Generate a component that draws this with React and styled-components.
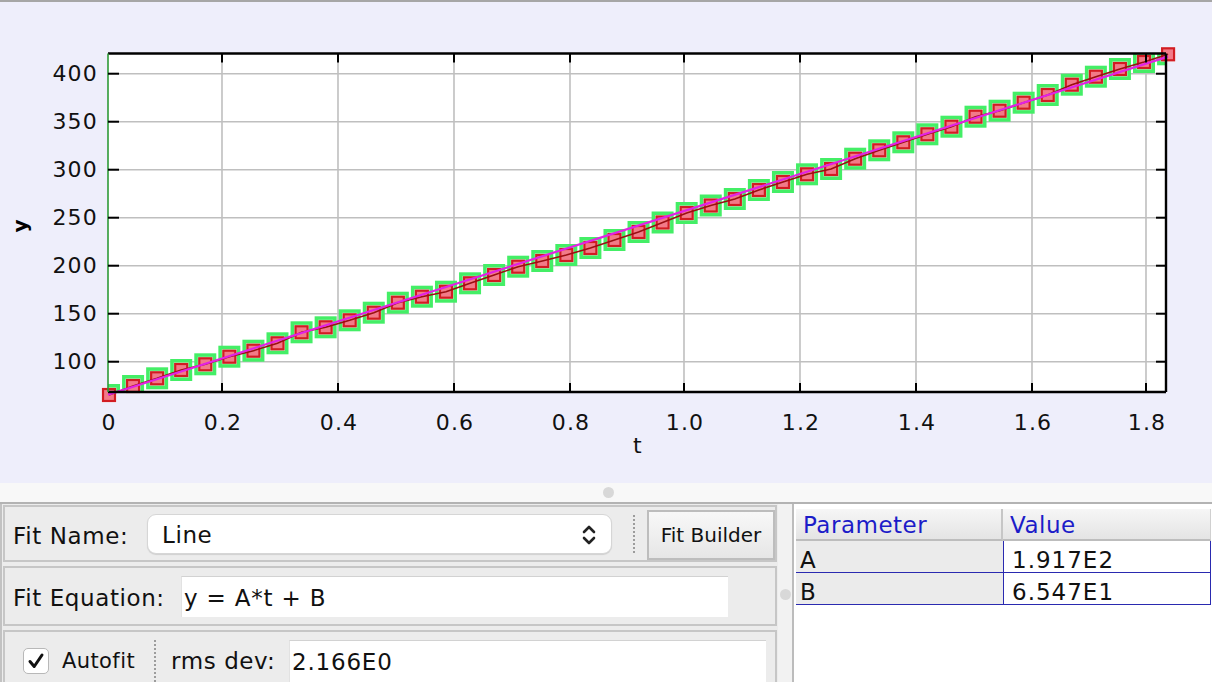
import React from 'react';
import styled, { createGlobalStyle } from 'styled-components';

const GlobalStyle = createGlobalStyle`
  html, body { margin: 0; padding: 0; background: #fff; }
  body { font-family: "DejaVu Sans", Verdana, sans-serif; color: #111; }
`;

const Window = styled.div`
  width: 1212px;
  height: 682px;
  overflow: hidden;
  display: flex;
  flex-direction: column;
  box-sizing: border-box;
  border-top: 2px solid #a6a6a6;
`;

const PlotPanel = styled.div`
  height: 481px;
  flex: none;
  background: #eeeefb;
  svg { display: block; }
`;

const HSplit = styled.div`
  height: 19px;
  flex: none;
  background: #f8f8f8;
  display: flex;
  justify-content: center;
  align-items: center;
`;

const Grip = styled.span`
  width: 11px;
  height: 11px;
  border-radius: 50%;
  background: #d8d8d8;
  margin-left: ${p => p.$shift ?? 0}px;
`;

const Bottom = styled.div`
  flex: 1;
  min-height: 0;
  display: flex;
  background: #ececec;
  border-top: 2px solid #b3b3b3;
`;

const FitPanel = styled.div`
  width: 778px;
  flex: none;
  box-sizing: border-box;
  padding: 1px 1px 0 1px;
  border-left: 2px solid #c2c2c2;
  display: flex;
  flex-direction: column;
  gap: 4px;
`;

const Row = styled.div`
  height: ${p => p.$h}px;
  flex: none;
  box-sizing: border-box;
  border: 2px solid #c6c6c6;
  background: #ececec;
  display: flex;
  align-items: center;
  padding-left: ${p => p.$pl ?? 8}px;
`;

const FieldLabel = styled.span`
  width: ${p => p.$w}px;
  flex: none;
  font-size: 23px;
  letter-spacing: 0.6px;
  white-space: nowrap;
  padding-top: ${p => p.$pt ?? 0}px;
`;

const Select = styled.div`
  width: 465px;
  height: 40px;
  box-sizing: border-box;
  background: #fff;
  border: 1px solid #d6d6d6;
  border-radius: 9px;
  box-shadow: 0 1px 1px rgba(0, 0, 0, 0.12);
  padding: 2px 14px 0 14px;
  display: flex;
  align-items: center;
  justify-content: space-between;
  font-size: 23px;
  letter-spacing: 0.6px;
`;

const DotSep = styled.span`
  width: 0;
  height: ${p => p.$h ?? 38}px;
  flex: none;
  border-left: 2px dotted #9c9c9c;
  margin-left: ${p => p.$ml}px;
  margin-right: ${p => p.$mr}px;
`;

const Button = styled.div`
  width: 128px;
  height: 50px;
  margin-top: 3px;
  box-sizing: border-box;
  border: 2px solid #bdbdbd;
  background: linear-gradient(#f8f8f8, #e6e6e6);
  display: flex;
  align-items: center;
  justify-content: center;
  font-size: 20px;
`;

const TextField = styled.div`
  width: ${p => p.$w}px;
  height: ${p => p.$h}px;
  flex: none;
  box-sizing: border-box;
  background: #fff;
  border-top: 1px solid #d2d2d2;
  border-left: 1px solid #e2e2e2;
  padding: ${p => p.$pt ?? 0}px 0 0 2px;
  display: flex;
  align-items: center;
  font-size: 23px;
  letter-spacing: 0.8px;
  white-space: nowrap;
`;

const CheckBox = styled.span`
  width: 26px;
  height: 26px;
  flex: none;
  box-sizing: border-box;
  margin-left: 18px;
  border: 1px solid #b8b8b8;
  border-radius: 5px;
  background: #fff;
  display: flex;
  align-items: center;
  justify-content: center;
`;

const CheckLabel = styled.span`
  width: 80px;
  margin-left: 13px;
  font-size: 21px;
  letter-spacing: 0.4px;
`;

const VSplit = styled.div`
  width: 14px;
  flex: none;
  display: flex;
  justify-content: center;
  align-items: center;
  padding-top: 2px;
  background: #f2f2f2;
`;

const TablePanel = styled.div`
  flex: 1;
  box-sizing: border-box;
  background: #fff;
  border-left: 2px solid #bcbcbc;
  padding: 5px 2px 0 2px;
`;

const Table = styled.div`
  display: grid;
  grid-template-columns: 207px 208px;
`;

const HeadCell = styled.div`
  height: 32px;
  box-sizing: border-box;
  background: linear-gradient(#f6f6f6, #e4e4e4);
  border-bottom: 2px solid #bdbdbd;
  border-right: ${p => (p.$first ? '2px solid #c6c6c6' : '1px solid #d0d0d0')};
  color: #1c1cc8;
  font-size: 23px;
  letter-spacing: 0.5px;
  padding: 1px 0 0 7px;
  display: flex;
  align-items: center;
`;

const NameCell = styled.div`
  height: 32px;
  box-sizing: border-box;
  background: #ebebeb;
  border-bottom: 1.5px solid #2a2ab0;
  font-size: 23px;
  padding: 6px 0 0 4px;
  display: flex;
  align-items: center;
`;

const ValueCell = styled(NameCell)`
  background: #fff;
  border-left: 1px solid #2a2ab0;
  border-right: 1px solid #2a2ab0;
  padding-left: 8px;
  letter-spacing: 1px;
`;

// chart geometry (pixel coords of the page)
const PL = 108, PT = 53.5, PR = 1166, PB = 392;
const XT = [108, 222, 338, 454, 570, 684, 800, 916, 1032, 1146];
const XL = ['0', '0.2', '0.4', '0.6', '0.8', '1.0', '1.2', '1.4', '1.6', '1.8'];
const YT = [73.7, 121.7, 169.7, 217.7, 265.7, 313.7, 361.7];
const YL = ['400', '350', '300', '250', '200', '150', '100'];
const PY = [395, 386, 378.3, 370, 364.3, 356.7, 350.7, 343.3, 332.3, 327.3, 320.3, 312.7, 302.7,
  296.7, 291.7, 283.3, 275, 266.7, 261, 255, 248, 240, 232, 222.5, 213, 205.5, 199, 190, 182,
  174.3, 169, 158.7, 150.3, 142.3, 134.3, 126.7, 116.7, 110.7, 102.7, 95, 84.7, 76.7, 69, 62, 54.3];
const pts = PY.map((y, i) => [109 + i * 24.07, y]);

const Chart = () => (
  <svg width="1212" height="481" viewBox="0 2 1212 481">
    <defs>
      <clipPath id="plotclip">
        <rect x={PL} y={PT} width={PR - PL} height={PB - PT} />
      </clipPath>
    </defs>
    <rect x={PL} y={PT} width={PR - PL} height={PB - PT} fill="#fff" />
    {XT.slice(1).map(x => (
      <line key={x} x1={x} y1={PT} x2={x} y2={PB} stroke="#bfbfbf" strokeWidth="1.6" />
    ))}
    {YT.map(y => (
      <line key={y} x1={PL} y1={y} x2={PR} y2={y} stroke="#bfbfbf" strokeWidth="1.6" />
    ))}
    <g clipPath="url(#plotclip)">
      {pts.map(([x, y], i) => (
        <rect key={i} x={x - 11} y={y - 11} width="22" height="22" fill="#44ee66" />
      ))}
    </g>
    {pts.map(([x, y], i) => (
      <g key={i}>
        <rect x={x - 7.5} y={y - 7.5} width="15" height="15" fill="#fff" opacity="0.7" />
        <rect x={x - 6} y={y - 6} width="12" height="12" fill="#f27a88" stroke="#d21c22" strokeWidth="2.2" />
      </g>
    ))}
    <polyline points={pts.map(p => p.join(',')).join(' ')} fill="none" stroke="#9a0f12" strokeWidth="1.6" />
    <line x1="108" y1="394.8" x2="1168" y2="56.6" stroke="#e222e4" strokeWidth="2.2" />
    {/* frame */}
    <line x1={PL} y1={PT} x2={PR} y2={PT} stroke="#000" strokeWidth="2.4" />
    <line x1={PL} y1={PB} x2={PR} y2={PB} stroke="#000" strokeWidth="2.4" />
    <line x1={PR} y1={PT} x2={PR} y2={PB} stroke="#000" strokeWidth="2.4" />
    <line x1={PL} y1={PT} x2={PL} y2={PB} stroke="#2e9a36" strokeWidth="1.6" />
    {XT.slice(1).map(x => (
      <g key={x}>
        <line x1={x} y1={PT} x2={x} y2={PT + 9} stroke="#000" strokeWidth="2" />
        <line x1={x} y1={PB} x2={x} y2={PB - 9} stroke="#000" strokeWidth="2" />
      </g>
    ))}
    {YT.map(y => (
      <g key={y}>
        <line x1={PL} y1={y} x2={PL + 11} y2={y} stroke="#000" strokeWidth="2" />
        <line x1={PR} y1={y} x2={PR - 10} y2={y} stroke="#000" strokeWidth="2" />
      </g>
    ))}
    <g fontFamily="DejaVu Sans, Verdana, sans-serif" fontSize="22" fill="#111" letterSpacing="1.2">
      {YT.map((y, i) => (
        <text key={y} x="98" y={y + 7} textAnchor="end">{YL[i]}</text>
      ))}
      {XT.map((x, i) => (
        <text key={x} x={x + 1} y="430" textAnchor="middle">{XL[i]}</text>
      ))}
      <text x="638" y="453" textAnchor="middle">t</text>
    </g>
    <text x="20" y="226" transform="rotate(-90 20 226)" textAnchor="middle" dominantBaseline="central"
      fontFamily="DejaVu Sans, sans-serif" fontSize="20" fontWeight="bold" fill="#000">y</text>
  </svg>
);

const Chevrons = () => (
  <svg width="16" height="24" viewBox="0 0 16 24">
    <path d="M3 9 L8 4 L13 9" fill="none" stroke="#222" strokeWidth="2.6" strokeLinecap="round" strokeLinejoin="round" />
    <path d="M3 15 L8 20 L13 15" fill="none" stroke="#222" strokeWidth="2.6" strokeLinecap="round" strokeLinejoin="round" />
  </svg>
);

const Check = () => (
  <svg width="18" height="18" viewBox="0 0 18 18">
    <path d="M3 9.5 L7.2 14.5 L15 3" fill="none" stroke="#111" strokeWidth="3" strokeLinecap="round" strokeLinejoin="round" />
  </svg>
);

const App = () => (
  <>
    <GlobalStyle />
    <Window>
      <PlotPanel>
        <Chart />
      </PlotPanel>
      <HSplit>
        <Grip $shift={4} />
      </HSplit>
      <Bottom>
        <FitPanel>
          <Row $h={57}>
            <FieldLabel $w={134} $pt={4}>Fit Name:</FieldLabel>
            <Select>
              <span>Line</span>
              <Chevrons />
            </Select>
            <DotSep $ml={21} $mr={12} />
            <Button>Fit Builder</Button>
          </Row>
          <Row $h={60}>
            <FieldLabel $w={168} $pt={4}>Fit Equation:</FieldLabel>
            <TextField $w={547} $h={41} $pt={2}>y = A*t + B</TextField>
          </Row>
          <Row $h={62} $pl={0}>
            <CheckBox><Check /></CheckBox>
            <CheckLabel>Autofit</CheckLabel>
            <DotSep $h={42} $ml={12} $mr={15} />
            <FieldLabel $w={118}>rms dev:</FieldLabel>
            <TextField $w={477} $h={42}>2.166E0</TextField>
          </Row>
        </FitPanel>
        <VSplit>
          <Grip />
        </VSplit>
        <TablePanel>
          <Table>
            <HeadCell $first>Parameter</HeadCell>
            <HeadCell>Value</HeadCell>
            <NameCell>A</NameCell>
            <ValueCell>1.917E2</ValueCell>
            <NameCell>B</NameCell>
            <ValueCell>6.547E1</ValueCell>
          </Table>
        </TablePanel>
      </Bottom>
    </Window>
  </>
);

export default App;
